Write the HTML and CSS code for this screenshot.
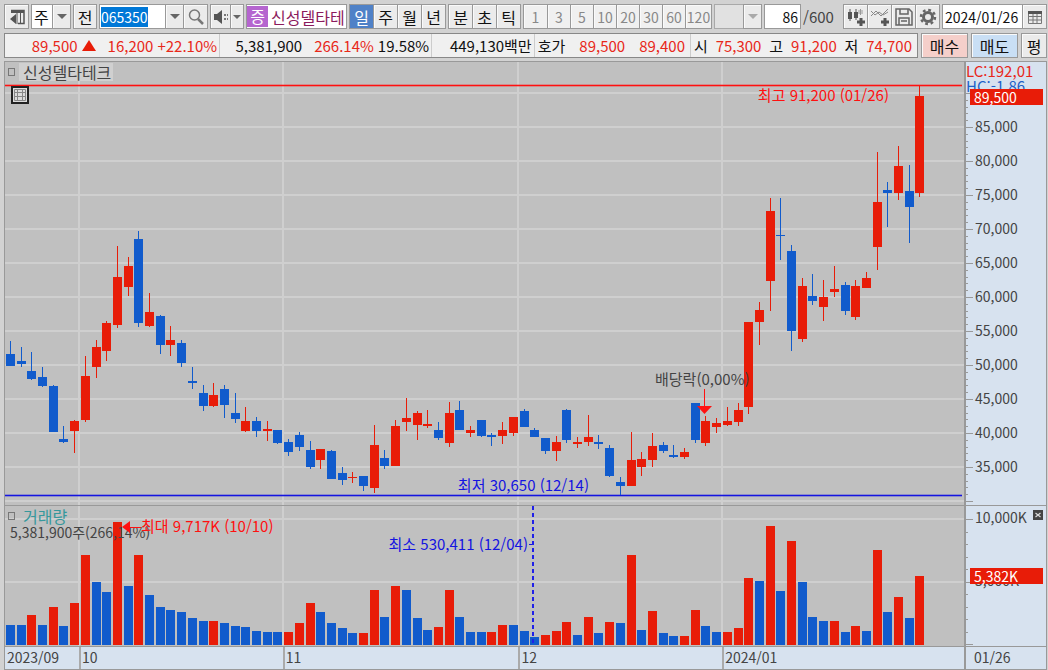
FILE: index.html
```
<!DOCTYPE html>
<html lang="ko">
<head>
<meta charset="utf-8">
<title>신성델타테크 차트</title>
<link rel="stylesheet" href="styles.css">
</head>
<body>
<header class="toolbar">
  <button class="btn w24" type="button" aria-label="패널 접기"><svg width="18" height="18" viewBox="0 0 18 18"><path d="M3 2.500H16V15.500H10" fill="none" stroke="#555" stroke-width="1.500"/><path d="M3 2H16V5H3ZM2 11L8 6V16Z" fill="#555"/><path d="M9 5V16M12.500 5V16" stroke="#555" stroke-width="1"/></svg></button>
  <div class="group">
    <select class="field period" aria-label="주기"><option>주</option></select>
    <button class="btn drop" type="button" aria-label="주기 목록"><i class="arrow"></i></button>
  </div>
  <button class="btn w24 prev" type="button">전</button>
  <div class="group">
    <input class="field code" id="code" type="text" value="065350" aria-label="종목코드">
    <button class="btn drop" type="button" aria-label="최근 종목"><i class="arrow"></i></button>
    <button class="btn w24" type="button" aria-label="종목 검색"><svg width="18" height="18" viewBox="0 0 18 18"><circle cx="7.500" cy="7" r="5" fill="none" stroke="#777" stroke-width="1.500"/><path d="M11 11L16 16" stroke="#777" stroke-width="2.500"/></svg></button>
  </div>
  <div class="group">
    <button class="btn sound" type="button" aria-label="소리"><svg width="18" height="18" viewBox="0 0 18 18"><path d="M2 6H5L10 2V16L5 12H2Z" fill="#555"/><path d="M12 6h2v2h-2zM15 6h1v2h-1zM12 10h2v2h-2zM15 10h1v2h-1z" fill="#777"/></svg></button>
    <button class="btn drop-s" type="button" aria-label="소리 설정"><i class="arrow small"></i></button>
  </div>
  <div class="stock"><span class="badge">증</span><span class="stock-name">신성델타테</span></div>
  <div class="group">
    <button class="btn w24 on" type="button">일</button><button class="btn w24" type="button">주</button><button class="btn w24" type="button">월</button><button class="btn w24" type="button">년</button>
  </div>
  <div class="group">
    <button class="btn w24" type="button">분</button><button class="btn w24" type="button">초</button><button class="btn w24" type="button">틱</button>
  </div>
  <div class="group minutes">
    <button class="btn w24" type="button">1</button><button class="btn w24" type="button">3</button><button class="btn w24" type="button">5</button><button class="btn w24" type="button">10</button><button class="btn w24" type="button">20</button><button class="btn w24" type="button">30</button><button class="btn w24" type="button">60</button><button class="btn w24" type="button">120</button>
  </div>
  <div class="group">
    <select class="field minute-pick" disabled aria-label="분 선택"><option></option></select>
    <button class="btn drop" type="button" disabled aria-label="분 목록"><i class="arrow pale"></i></button>
  </div>
  <label class="count"><input class="field bars" type="text" value="86" aria-label="봉 개수"><span>/600</span></label>
  <div class="group tools">
    <button class="btn w24" type="button" aria-label="봉 추가"><svg width="20" height="20" viewBox="0 0 20 20"><path d="M2 5h4v7H2zM8 5h4v6H8z" fill="#555"/><path d="M4 2V14M10 2V13" stroke="#555"/><path d="M14.500 2V8M13 3v4M16 3v4" stroke="#999"/><path d="M15 11V19M11 15H19" stroke="#555" stroke-width="3"/></svg></button><button class="btn w24" type="button" aria-label="지표 추가"><svg width="20" height="20" viewBox="0 0 20 20"><path d="M1 9L6 4L11 9L18 2M1 4L5 8L9 5L13 8L18 5" fill="none" stroke="#888"/><path d="M15 11V19M11 15H19" stroke="#555" stroke-width="3"/></svg></button><button class="btn w24" type="button" aria-label="저장"><svg width="20" height="20" viewBox="0 0 20 20"><path d="M2 2H15L18 5V18H2Z" fill="none" stroke="#666" stroke-width="1.500"/><path d="M6 2V7H14V2M5 18V11H15V18M7 14H13" fill="none" stroke="#666" stroke-width="1.500"/></svg></button><button class="btn w24" type="button" aria-label="설정"><svg width="20" height="20" viewBox="0 0 20 20"><circle cx="10" cy="10" r="4.500" fill="none" stroke="#666" stroke-width="3"/><circle cx="10" cy="10" r="7" fill="none" stroke="#666" stroke-width="2.500" stroke-dasharray="2.750"/></svg></button>
  </div>
  <div class="group">
    <input class="field date" type="text" value="2024/01/26" aria-label="기준일">
    <button class="btn w24" type="button" aria-label="달력"><svg width="16" height="16" viewBox="0 0 16 16"><path d="M1.500 3.500H14.500V14.500H1.500ZM1.500 7.500H14.500M1.500 11H14.500M6 4V14M10 4V14" fill="none" stroke="#777"/><path d="M1 2H15V5H1Z" fill="#555"/></svg></button>
  </div>
</header>

<section class="quote">
  <div class="info">
    <div class="cell c1 up"><span>89,500</span><i class="rise"></i><span>16,200</span><span>+22.10%</span></div>
    <div class="cell c2"><span>5,381,900</span><span class="up">266.14%</span><span>19.58%</span></div>
    <div class="cell c3"><span>449,130백만</span></div>
    <div class="cell c4"><span>호가</span><span class="up">89,500</span><span class="up">89,400</span></div>
    <div class="cell c5"><span>시</span><span class="up">75,300</span><span>고</span><span class="up">91,200</span><span>저</span><span class="up">74,700</span></div>
  </div>
  <button class="btn trade buy" type="button">매수</button>
  <button class="btn trade sell" type="button">매도</button>
  <button class="btn trade avg" type="button">평</button>
</section>

<main class="chart">
  <div class="plot price">
    <svg id="price"></svg>
    <div class="legend"><i class="box"></i><span class="title">신성델타테크</span></div>
    <button class="grid-btn" type="button" aria-label="표 보기"><svg width="14" height="14" viewBox="0 0 14 14"><path d="M1.500 1.500H12.500V12.500H1.500ZM1 4.500H13M1 8.500H13M4.500 1V13M9.500 1V13" fill="none" stroke="#888"/></svg></button>
  </div>
  <div class="axis price-axis">
    <svg id="priceAxis"></svg>
    <div class="ratio"><span class="lc">LC:192,01</span><span class="hc">HC:-1,86</span></div>
    <div class="tag tag-price">89,500</div>
  </div>
  <div class="plot volume">
    <svg id="volume"></svg>
    <div class="legend"><i class="box"></i><span class="vol-title">거래량</span></div>
  </div>
  <div class="axis vol-axis">
    <svg id="volumeAxis"></svg>
    <button class="close" type="button" aria-label="닫기"><svg width="10" height="10" viewBox="0 0 10 10"><path d="M2.500 3L7.500 7M7.500 3L2.500 7" stroke="#ddd" stroke-width="1.200"/></svg></button>
    <div class="tag tag-vol">5,382K</div>
  </div>
  <div class="months"><span class="m1">2023/09</span><span class="m2">10</span><span class="m3">11</span><span class="m4">12</span><span class="m5">2024/01</span></div>
  <div class="last-day">01/26</div>
</main>
<script src="chart.js"></script>
</body>
</html>
```

FILE: styles.css
```
* { box-sizing: border-box; }
html { height: 100%; }
body {
  margin: 0;
  height: 100%;
  padding: 4px 1px 0 4px;
  display: flex;
  flex-direction: column;
  background: #d2d2d2;
  font: 15px/20px "Noto Sans CJK KR", sans-serif;
  color: #111;
  overflow: hidden;
}
button, input, select { font: inherit; color: inherit; margin: 0; border-radius: 0; }
svg { display: block; }

.toolbar { display: flex; gap: 2px; height: 25px; flex: none; }
.group { display: flex; flex: none; }
.btn, .field {
  height: 25px;
  padding: 0;
  border: 1px solid #999;
  outline: 0;
}
.group > * + * { margin-left: -1px; }
.btn {
  display: flex;
  align-items: center;
  justify-content: center;
  background: #ebebeb;
  box-shadow: inset 1px 1px 0 #fafafa;
  flex: none;
  white-space: nowrap;
  font-size: 16px;
}
.w24 { width: 25px; }
.prev { width: 24px; }
.drop { width: 19px; }
.drop-s { width: 14px; }
.sound { width: 21px; }
.field { background: #fff; appearance: none; font-size: 14px; }
.period { width: 22px; padding: 0 2px; font-size: 16px; }
.code { width: 67px; padding: 0 1px; }
.code::selection { background: #0078d7; color: #fff; }
.arrow {
  border: 5px solid transparent;
  border-top-color: #666;
  border-bottom: 0;
}
.arrow.small { border-width: 4px 4px 0; }
.arrow.pale { border-top-color: #aaa; }
.stock {
  display: flex;
  flex: none;
  align-items: center;
  width: 101px;
  border: 1px solid #999;
  background: #fff;
  font-size: 16px;
  white-space: nowrap;
}
.badge { width: 21px; line-height: 21px; text-align: center; background: #b565cf; color: #fff; flex: none; margin-right: 3px; }
.stock-name { color: #8b1a5c; }
.btn.on { background: #4f81c7; color: #fff; box-shadow: none; }
.minutes .btn { color: #888; background: #f0f0f0; font-size: 14px; }
.minutes .btn + .btn { width: 24px; }
.minutes .btn:last-child { width: 27px; }
.minute-pick { width: 30px; background: #e8e8e8; }
.count { display: flex; align-items: center; gap: 2px; color: #444; font-size: 15px; }
.bars { width: 37px; text-align: right; padding-right: 2px; color: #111; }
.tools { margin-left: auto; }
.date { width: 81px; padding: 0 2px; }

.quote { display: flex; gap: 3px; margin-top: 4px; height: 25px; flex: none; }
.info { flex: 1; display: grid; grid-template-columns: 215fr 213fr 103fr 157fr 228fr; border: 1px solid #888; background: #f0f0f0; }
.cell { display: flex; align-items: center; justify-content: flex-end; padding: 0 2px; white-space: nowrap; }
.cell + .cell { border-left: 1px solid #ccc; }
.c1 span:nth-of-type(2) { margin: 0 4px 0 12px; }
.c2 { gap: 4px; }
.c2 .up { margin-left: 8px; }
.c4, .c5 { justify-content: space-between; padding: 0 5px 0 3px; }
.up { color: #e8281a; }
.rise { border: 7px solid transparent; border-bottom: 11px solid #e81c08; border-top: 0; margin-left: 4px; }
.trade { width: 47px; }
.buy { background: #f5cfca; }
.sell { background: #c9dff5; }
.avg { width: 26px; }

.chart {
  flex: 1;
  min-height: 0;
  margin-top: 3px;
  border: 1px solid #999;
  display: grid;
  grid-template-columns: minmax(0, 1fr) 82px;
  grid-template-rows: minmax(0, 444fr) minmax(0, 141fr) 22px;
}
.plot, .axis { position: relative; overflow: hidden; border-bottom: 1px solid #999; }
.plot { background: #c0c0c0; }
.plot > svg, .axis > svg { position: absolute; width: 100%; height: 100%; }
.axis, .months, .last-day { background: #d7e2ef; font-size: 14px; }
.axis { border-left: 2px solid #999; }
.legend { position: absolute; left: 3px; top: 1px; display: flex; align-items: center; gap: 4px; font-size: 16px; }
.box { width: 7px; height: 8px; border: 1px solid #777; }
.title { background: #d0d0d0; color: #444; line-height: 18px; padding: 0 2px 0 4px; }
.vol-title { color: #36989c; line-height: 18px; padding-left: 4px; }
.grid-btn { position: absolute; left: 6px; top: 24px; width: 18px; height: 18px; padding: 0; border: 2px solid #222; background: #ddd; }
.ratio { position: absolute; left: 0; top: 0; line-height: 15px; padding-top: 1px; font-size: 15px; }
.ratio span { display: block; }
.lc { color: #e8281a; }
.hc { color: #1e62c8; }
.tag { position: absolute; left: 4px; right: 3px; height: 16px; line-height: 16px; padding-left: 4px; background: #e81c08; color: #fff; }
.tag-price { top: 6%; }
.tag-vol { top: 44%; }
.close { position: absolute; right: 3px; top: 4px; width: 10px; height: 10px; padding: 0; border: 0; background: #444; }
.months { display: grid; grid-template-columns: 74fr 204fr 236fr 204fr 242fr; color: #444; }
.months span { padding-left: 2px; line-height: 20px; }
.months span + span { border-left: 2px solid #aaa; padding-left: 1px; }
.last-day { border-left: 2px solid #999; padding-left: 8px; line-height: 20px; color: #444; }

svg text { font: inherit; fill: #444; }
svg text.note { font-size: 14px; }
.grid { stroke: #cfcfcf; stroke-width: 2; }
.tick { stroke: #999; stroke-width: 1; }
.r { fill: #e81c08; stroke: #e81c08; }
.b { fill: #115bcc; stroke: #115bcc; }
.body { stroke: none; }
.high-line { stroke: #ff1010; }
.low-line { stroke: #1414e0; }
svg text.high { fill: #ff1010; }
svg text.low { fill: #1414e0; }
.high-fill { fill: #ff1010; }
.low-fill { fill: #1414e0; }
.high-glow { fill: #ff1010; opacity: 0.3; }
.low-glow { fill: #1414e0; opacity: 0.3; }
.dash { stroke: #2020e8; stroke-width: 2; stroke-dasharray: 4 3; }
```

FILE: chart.js
```
// Each row: colour, high, body top, body bottom, low, volume top, volume colour
const bars = `b 341 354 366 366 625 b
b 347 361 364 367 625 b
b 352 371 379 380 615 r
b 367 377 386 387 625 b
b 385 386 432 432 607 r
b 426 439 442 443 626 b
r 420 421 431 453 603 r
r 356 376 420 422 555 r
r 340 347 367 378 582 b
r 321 323 351 361 592 b
r 246 277 325 328 522 r
r 257 266 287 296 586 b
b 231 239 323 327 555 r
r 293 312 326 327 595 b
b 315 316 345 354 607 b
r 326 340 345 356 610 b
b 340 343 363 367 612 b
b 367 381 383 389 618 b
b 385 393 406 411 621 b
r 383 395 406 407 621 r
b 385 389 405 418 623 b
b 393 413 419 423 626 b
r 407 421 431 432 627 b
b 417 421 431 437 631 b
r 421 429 431 441 632 b
b 430 430 443 444 632 b
b 439 442 452 456 632 r
b 432 435 447 451 623 r
b 441 450 467 469 603 r
r 449 449 460 469 612 b
b 450 451 479 479 623 b
b 467 473 480 485 628 b
r 472 477 478 483 633 b
b 476 476 486 491 633 r
r 425 445 488 493 590 r
b 450 458 466 469 617 b
r 420 426 466 466 586 r
r 398 418 422 431 590 b
r 411 413 425 440 618 b
r 410 424 426 428 630 b
b 422 430 438 440 627 r
r 402 413 443 447 590 r
b 401 410 430 430 617 b
r 426 430 433 437 632 b
b 420 420 436 437 632 b
b 433 435 437 446 632 r
r 422 430 436 444 625 r
r 417 417 433 436 625 b
b 409 411 427 427 631 b
b 428 430 437 437 637 b
b 438 438 451 454 635 r
r 436 442 451 461 631 r
b 409 410 440 443 622 r
r 437 442 444 448 635 b
r 415 437 442 446 617 r
b 435 442 444 449 633 b
b 445 448 476 477 622 r
b 477 482 486 495 623 b
r 432 460 486 486 555 r
r 452 459 467 476 630 b
r 433 446 460 467 611 r
b 442 445 451 453 633 b
b 445 455 457 458 636 b
r 448 452 457 459 636 r
b 403 403 440 443 610 r
r 416 421 443 446 626 b
r 418 423 427 433 632 b
r 407 421 425 426 632 r
r 403 410 422 426 628 r
r 322 322 407 414 578 r
r 302 310 322 345 581 b
r 198 211 281 311 526 r
b 198 235 236 260 591 b
b 245 251 331 351 541 r
r 278 286 339 342 582 b
b 274 296 301 305 617 b
r 280 297 307 321 621 b
r 266 289 292 297 621 r
b 282 285 311 315 632 b
r 280 286 317 320 626 r
r 272 278 288 288 631 b
r 152 202 247 270 550 r
b 182 190 193 227 612 b
r 146 166 193 200 597 r
b 165 191 207 243 618 b
r 86 96 193 197 576 r`.split("\n").map(row => row.split(" "));

const NS = "http://www.w3.org/2000/svg";
const PLOT_W = 960, PRICE_TOP = 62, PRICE_H = 443, VOL_TOP = 506, VOL_H = 140;

function panel(id) {
  const svg = document.getElementById(id);
  svg.replaceChildren();
  const add = (name, attrs, text) => {
    const el = document.createElementNS(NS, name);
    for (const key in attrs) el.setAttribute(key, attrs[key]);
    if (text) el.textContent = text;
    svg.append(el);
  };
  return {
    w: svg.clientWidth, h: svg.clientHeight, add,
    line: (x1, y1, x2, y2, cls) => add("line", { x1, y1, x2, y2, class: cls }),
    rect: (x, y, width, height, cls) => add("rect", { x, y, width, height, class: cls }),
    text: (x, y, t, cls = "", anchor = "start") => add("text", { x, y, class: cls, "text-anchor": anchor }, t)
  };
}

function draw() {
  const p = panel("price"), v = panel("volume");
  const X = x => Math.round((x - 5) * p.w / PLOT_W);
  const Y = y => Math.round((y - PRICE_TOP) * p.h / PRICE_H);
  const V = y => Math.round((y - VOL_TOP) * v.h / VOL_H);
  const months = [79, 283, 519, 723];
  const center = i => X(10 + i * 10.71);
  const half = Math.max(1, Math.round(4 * p.w / PLOT_W));

  for (let i = 0; i < 13; i++) p.line(0, Y(93 + i * 34), p.w, Y(93 + i * 34), "grid");
  for (const y of [519, 582]) v.line(0, V(y), v.w, V(y), "grid");
  for (const x of months) {
    p.line(X(x), 0, X(x), p.h, "grid");
    v.line(X(x), 0, X(x), v.h, "grid");
  }
  p.rect(0, Y(84), p.w - 2, 3, "high-glow");
  p.rect(0, Y(85), p.w - 2, 1, "high-fill");
  p.rect(0, Y(494), p.w - 2, 3, "low-glow");
  p.rect(0, Y(495), p.w - 2, 1, "low-fill");

  bars.forEach(([color, high, top, bottom, low, vol, volColor], i) => {
    const x = center(i);
    p.line(x + 0.5, Y(high), x + 0.5, Y(low), color);
    p.rect(x - half, Y(top), half * 2 + 1, Math.max(1, Y(bottom) - Y(top)), color + " body");
    v.rect(x - half, V(vol), half * 2 + 1, V(645) - V(vol), volColor + " body");
  });

  p.text(X(890), Y(101), "최고 91,200 (01/26)", "high", "end");
  p.text(X(590), Y(491), "최저 30,650 (12/14)", "low", "end");
  p.text(X(656), Y(385), "배당락(0,00%)");
  p.line(X(705) + 0.5, Y(389), X(705) + 0.5, Y(407), "high-line");
  p.add("path", { d: `M${X(705) - 7} ${Y(406)}h15l-7.500 8z`, class: "high-fill" });

  v.text(X(10), V(538), "5,381,900주(266,14%)", "note");
  v.add("path", { d: `M${X(122)} ${V(527)}l8 -6v12z`, class: "high-fill" });
  v.line(X(130), V(527) + 0.5, X(141), V(527) + 0.5, "high-line");
  v.text(X(141), V(532), "최대 9,717K (10/10)", "high");
  v.text(X(529), V(550), "최소 530,411 (12/04)", "low", "end");
  v.line(X(530), V(544) + 0.5, X(534), V(544) + 0.5, "low-line");
  v.line(X(534), 0, X(534), V(645), "dash");

  const pa = panel("priceAxis"), va = panel("volumeAxis");
  for (let n = 0; n <= 60; n++) {
    const y = Y(93 + n * 6.8) + 0.5;
    pa.line(0, y, n % 5 ? 2 : 7, y, "tick");
    if (n % 5 === 0 && n > 0 && n < 60) pa.text(9, y + 4, (90 - n) + ",000");
  }
  for (let n = 0; n <= 10; n++) {
    const y = V(519 + n * 12.5) + 0.5;
    va.line(0, y, n % 5 ? 2 : 7, y, "tick");
  }
  va.text(9, V(523), "10,000K");
  va.text(9, V(586), "5,000K");
}

draw();
addEventListener("resize", draw);
const code = document.getElementById("code");
code.focus();
code.select();
```
